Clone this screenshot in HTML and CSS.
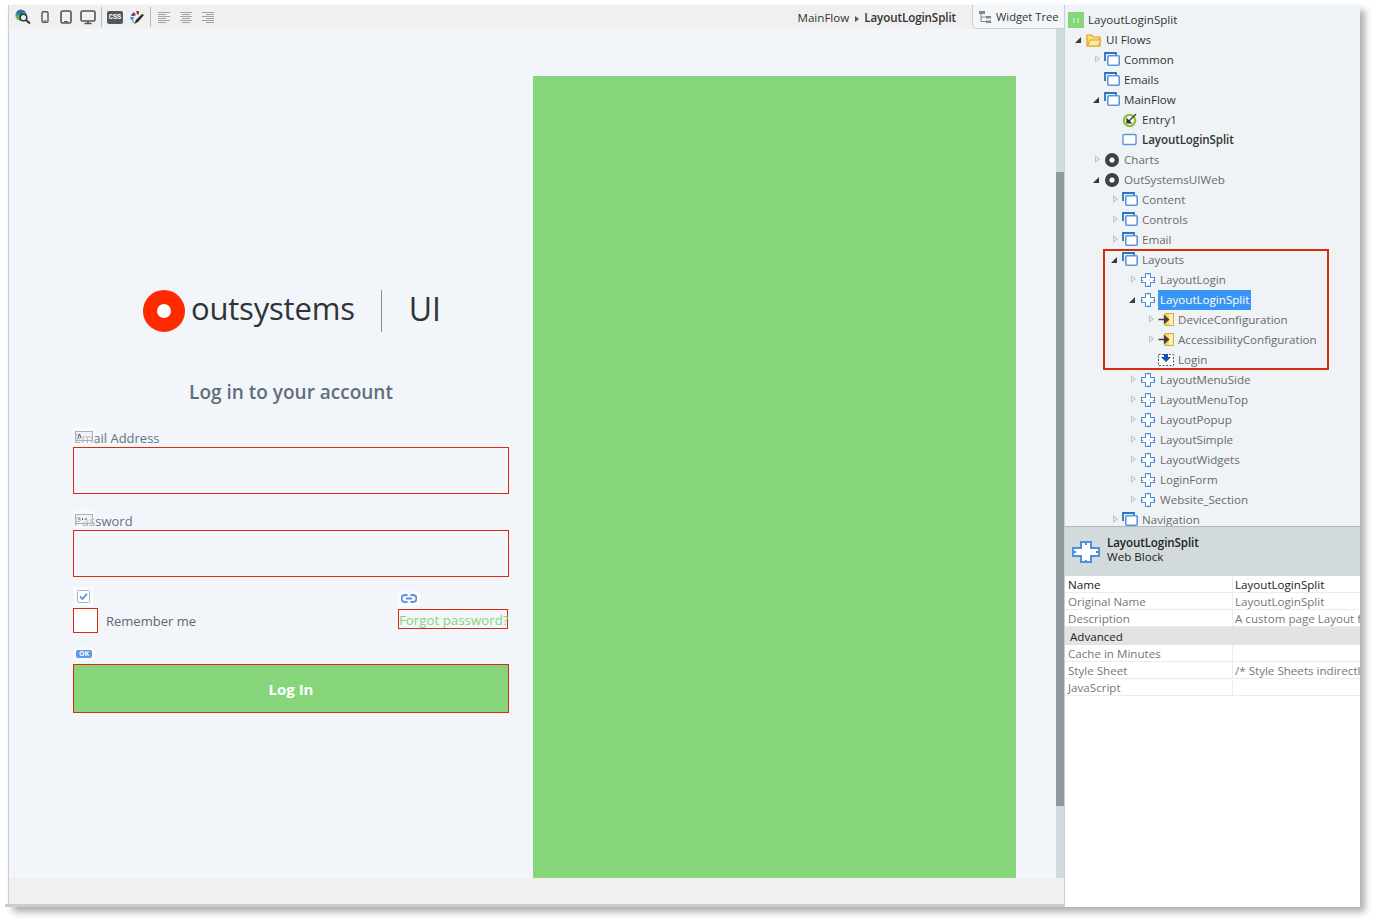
FILE: index.html
```html
<!DOCTYPE html>
<html lang="en">
<head>
  <meta charset="UTF-8">
  <title>LayoutLoginSplit</title>
  <link rel="stylesheet" href="styles.css">
</head>
<body>

<svg class="defs" width="0" height="0">
  <symbol id="flow" viewBox="0 0 16 16">
    <path d="M1 9V1h11v2" fill="none" stroke="#2a74c2" stroke-width="1.800"/>
    <rect x="3.800" y="3.800" width="11.400" height="9.400" rx="1" fill="#fff" stroke="#5f95d9" stroke-width="1.600"/>
  </symbol>
  <symbol id="block" viewBox="0 0 16 16">
    <path d="M5.500 1.500h5v4h4v5h-4v4h-5v-4h-4v-5h4z" fill="#fff" stroke="#4d8fdc" stroke-width="1.200" shape-rendering="crispEdges"/>
    <path d="M8 1.500v1.500M8 13v1.500M1.500 8H3M13 8h1.500" stroke="#4d8fdc" shape-rendering="crispEdges"/>
  </symbol>
  <symbol id="input" viewBox="0 0 16 16">
    <rect x="7" y="1.500" width="8.500" height="12" fill="#ffd84d" stroke="#c9b15a"/>
    <path d="M11 2h4v11h-4z" fill="#fff0b0"/>
    <path d="M.500 7.500h9M6.500 4l4 3.500-4 3.500z" fill="#4a3f3f" stroke="#4a3f3f" stroke-width="1.400"/>
  </symbol>
  <symbol id="placeholder" viewBox="0 0 16 16">
    <rect x=".5" y="2.500" width="15" height="11" fill="#fff" stroke="#555" stroke-dasharray="2 1.500"/>
    <path d="M6 2h4v3h3l-5 5-5-5h3z" fill="#0b55b0"/>
  </symbol>
  <symbol id="module" viewBox="0 0 16 16">
    <circle cx="8" cy="8" r="7" fill="#3b4347"/>
    <circle cx="8" cy="8" r="2.600" fill="#fff"/>
  </symbol>
</svg>

<div class="window">
  <div class="editor">
    <div class="toolbar">
      <div class="tools">
        <svg class="tool" width="18" height="16" viewBox="0 0 18 16"><circle cx="7" cy="6" r="5.500" fill="#3f8f8f"/><path d="M3 2l4-1.500 3 2-3 3-3-1z" fill="#2f6fb5"/><path d="M1.500 7l3-1 1 4-2 1z" fill="#7fb04a"/><circle cx="9.500" cy="8.500" r="3.300" fill="#e8f0f0" stroke="#333" stroke-width="1.500"/><path d="M12 11l4 3.500" stroke="#333" stroke-width="2"/></svg>
        <svg class="tool t-phone" width="8" height="12" viewBox="0 0 8 12"><rect x="1" y=".8" width="6" height="10.400" rx="1.300" fill="none" stroke="#555" stroke-width="1.400"/><path d="M3 9.800h2" stroke="#555"/></svg>
        <svg class="tool t-tablet" width="12" height="14" viewBox="0 0 12 14"><rect x="1" y="1" width="10" height="12" rx="1.500" fill="none" stroke="#555" stroke-width="1.600"/><path d="M4 11.500h4" stroke="#555"/></svg>
        <svg class="tool t-desktop" width="16" height="15" viewBox="0 0 16 15"><rect x="1" y="1" width="14" height="10" rx="1.500" fill="none" stroke="#555" stroke-width="1.600"/><path d="M4.500 13.500h7M8 11v2" stroke="#555" stroke-width="1.600"/></svg>
        <span class="sep"></span>
        <span class="css-icon">CSS</span>
        <svg class="tool" width="16" height="15" viewBox="0 0 16 15"><path d="M2 6a6 6 0 0 1 3-4l2 3-2 1z" fill="#6b3f8f"/><path d="M7 1h3v3.500H8z" fill="#c9302c"/><path d="M1 7h4l-1 3H2z" fill="#2f9ae0"/><path d="M3 10.500h2l-1 3z" fill="#2f9ae0"/><path d="M5 14l2-4 6-6 2 1-6 7z" fill="#2b2b2b"/></svg>
        <span class="sep sep-2"></span>
        <span class="align a-left"><i></i><i></i><i></i><i></i><i></i><i></i></span>
        <span class="align a-center"><i></i><i></i><i></i><i></i><i></i><i></i></span>
        <span class="align a-right"><i></i><i></i><i></i><i></i><i></i><i></i></span>
      </div>
      <div class="crumbs">MainFlow <span class="crumb-arrow"></span> <b>LayoutLoginSplit</b></div>
      <div class="widget-tab">
        <svg width="14" height="14" viewBox="0 0 14 14"><path d="M1 1h6v3H1zM8 6h5v2.500H8zM8 10.500h5V13H8z" fill="#7d8a8f"/><path d="M3 4v7.500h5M3 7h5" fill="none" stroke="#7d8a8f"/></svg>
        Widget Tree
      </div>
    </div>
    <div class="canvas-wrap">
      <div class="canvas">
        <div class="login">
          <div class="logo">
            <span class="logo-mark"></span>
            <span class="logo-name">outsystems</span>
            <span class="logo-div"></span>
            <span class="logo-ui">UI</span>
          </div>
          <h1 class="login-title">Log in to your account</h1>

          <div class="field">
            <div class="label-line">
              <span class="ph-icon">
                <svg width="18" height="10" viewBox="0 0 18 10"><rect x=".5" y=".5" width="17" height="9" fill="#e8ebee" fill-opacity=".4" stroke="#a9b0b6"/><path d="M3 7l1.500-4L6 7" fill="none" stroke="#555"/></svg>
              </span>
              <label class="label">Email Address</label>
            </div>
            <div class="input"></div>
          </div>
          <div class="field">
            <div class="label-line">
              <span class="ph-icon">
                <svg width="18" height="10" viewBox="0 0 18 10"><rect x=".5" y=".5" width="17" height="9" fill="#e8ebee" fill-opacity=".4" stroke="#a9b0b6"/><path d="M3.500 5h1M7 5h1M10.500 5h1" stroke="#2f6fc9" stroke-width="2"/></svg>
              </span>
              <label class="label">Password</label>
            </div>
            <div class="input"></div>
          </div>

          <div class="options">
            <div class="remember">
              <svg class="check-icon" width="13" height="13" viewBox="0 0 13 13"><rect x=".5" y=".5" width="12" height="12" rx="1" fill="#fff" stroke="#aab4c0"/><path d="M3 6.500l2.500 2.500L10 3.800" fill="none" stroke="#5b93d8" stroke-width="1.800"/></svg>
              <div class="remember-line">
                <span class="checkbox"></span>
                <span class="remember-text">Remember me</span>
              </div>
            </div>
            <div class="forgot">
              <svg class="link-icon" width="16" height="9" viewBox="0 0 16 9"><path d="M6.500 1H4a3.500 3.500 0 0 0 0 7h2.500M9.500 1H12a3.500 3.500 0 0 1 0 7H9.500M5 4.500h6" fill="none" stroke="#5b93d8" stroke-width="2"/></svg>
              <a class="forgot-link">Forgot password?</a>
            </div>
          </div>

          <span class="ok-icon">OK</span>
          <div class="login-btn">Log In</div>
        </div>
        <div class="green-panel"></div>
      </div>
      <div class="scroll"><div class="scroll-thumb"></div></div>
    </div>
    <div class="footer"></div>
  </div>

  <div class="side">
    <div class="tree">
      <div class="row l0"><span class="app-icon">I I</span><span class="txt dark">LayoutLoginSplit</span></div>
      <div class="row l1"><span class="arr open"></span><svg class="ic" viewBox="0 0 16 16"><path d="M1 14V3h5l1.500 2H14v9z" fill="#ffd875" stroke="#e0a020" stroke-width="1.200"/><path d="M1.500 14l2.500-6h11l-2.500 6z" fill="#ffe9a8" stroke="#e0a020"/></svg><span class="txt dark">UI Flows</span></div>
      <div class="row l2"><span class="arr"></span><svg class="ic"><use href="#flow"/></svg><span class="txt dark">Common</span></div>
      <div class="row l2"><span class="arr none"></span><svg class="ic"><use href="#flow"/></svg><span class="txt dark">Emails</span></div>
      <div class="row l2"><span class="arr open"></span><svg class="ic"><use href="#flow"/></svg><span class="txt dark">MainFlow</span></div>
      <div class="row l3"><span class="arr none"></span><svg class="ic" viewBox="0 0 16 16"><circle cx="7.500" cy="8.500" r="5.600" fill="#fff" stroke="#8cc13f" stroke-width="2.400"/><path d="M5 11V7l4 4zM7 9l7-7" fill="#333" stroke="#333" stroke-width="1.200"/></svg><span class="txt dark">Entry1</span></div>
      <div class="row l3"><span class="arr none"></span><svg class="ic" viewBox="0 0 16 16"><rect x="1" y="2.500" width="13" height="10" rx="1" fill="#fff" stroke="#5f95d9" stroke-width="1.400"/></svg><span class="txt dark"><b>LayoutLoginSplit</b></span></div>
      <div class="row l2"><span class="arr"></span><svg class="ic"><use href="#module"/></svg><span class="txt">Charts</span></div>
      <div class="row l2"><span class="arr open"></span><svg class="ic"><use href="#module"/></svg><span class="txt">OutSystemsUIWeb</span></div>
      <div class="row l3"><span class="arr"></span><svg class="ic"><use href="#flow"/></svg><span class="txt">Content</span></div>
      <div class="row l3"><span class="arr"></span><svg class="ic"><use href="#flow"/></svg><span class="txt">Controls</span></div>
      <div class="row l3"><span class="arr"></span><svg class="ic"><use href="#flow"/></svg><span class="txt">Email</span></div>
      <div class="row l3"><span class="arr open"></span><svg class="ic"><use href="#flow"/></svg><span class="txt">Layouts</span></div>
      <div class="row l4"><span class="arr"></span><svg class="ic"><use href="#block"/></svg><span class="txt">LayoutLogin</span></div>
      <div class="row l4"><span class="arr open"></span><svg class="ic"><use href="#block"/></svg><span class="txt selected">LayoutLoginSplit</span></div>
      <div class="row l5"><span class="arr"></span><svg class="ic"><use href="#input"/></svg><span class="txt">DeviceConfiguration</span></div>
      <div class="row l5"><span class="arr"></span><svg class="ic"><use href="#input"/></svg><span class="txt">AccessibilityConfiguration</span></div>
      <div class="row l5"><span class="arr none"></span><svg class="ic"><use href="#placeholder"/></svg><span class="txt">Login</span></div>
      <div class="row l4"><span class="arr"></span><svg class="ic"><use href="#block"/></svg><span class="txt">LayoutMenuSide</span></div>
      <div class="row l4"><span class="arr"></span><svg class="ic"><use href="#block"/></svg><span class="txt">LayoutMenuTop</span></div>
      <div class="row l4"><span class="arr"></span><svg class="ic"><use href="#block"/></svg><span class="txt">LayoutPopup</span></div>
      <div class="row l4"><span class="arr"></span><svg class="ic"><use href="#block"/></svg><span class="txt">LayoutSimple</span></div>
      <div class="row l4"><span class="arr"></span><svg class="ic"><use href="#block"/></svg><span class="txt">LayoutWidgets</span></div>
      <div class="row l4"><span class="arr"></span><svg class="ic"><use href="#block"/></svg><span class="txt">LoginForm</span></div>
      <div class="row l4"><span class="arr"></span><svg class="ic"><use href="#block"/></svg><span class="txt">Website_Section</span></div>
      <div class="row l3"><span class="arr"></span><svg class="ic"><use href="#flow"/></svg><span class="txt">Navigation</span></div>
      <div class="highlight"></div>
    </div>

    <div class="info">
      <svg class="info-icon" width="32" height="24" viewBox="0 0 16 16" preserveAspectRatio="none"><use href="#block"/></svg>
      <div class="info-text"><b>LayoutLoginSplit</b><br>Web Block</div>
    </div>

    <div class="props">
      <div class="prop dark"><span>Name</span><span>LayoutLoginSplit</span></div>
      <div class="prop"><span>Original Name</span><span>LayoutLoginSplit</span></div>
      <div class="prop"><span>Description</span><span>A custom page Layout for login screens</span></div>
      <div class="prop-group">Advanced</div>
      <div class="prop"><span>Cache in Minutes</span><span></span></div>
      <div class="prop"><span>Style Sheet</span><span>/* Style Sheets indirectly applied */</span></div>
      <div class="prop"><span>JavaScript</span><span></span></div>
    </div>
  </div>
</div>

</body>
</html>
```

FILE: styles.css
```css
* { box-sizing: border-box; }
body { margin: 0; padding: 5px 0 0 8px; min-height: 922px; background: #fff; font-family: "Open Sans", "Noto Sans", sans-serif; font-size: 11.6px; color: #555; }
.defs { display: block; height: 0; }

.window { display: flex; width: 1352px; height: 902px; background: #fff; box-shadow: 5px 5px 7px rgba(0, 0, 0, .32); }

/* left: preview */
.editor { display: flex; flex-direction: column; width: 1057px; border-left: 1px solid #c5d0d2; border-right: 1px solid #c5d0d2; }
.toolbar { display: flex; align-items: center; height: 24px; flex: none; background: #f0f0f0; position: relative; }
.tools { display: flex; align-items: center; padding-left: 5px; }
.tool { display: block; margin-right: 6px; }
.t-phone { margin: 0 11px 0 3px; }
.t-tablet { margin-right: 8px; }
.t-desktop { margin-right: 3px; }
.sep { width: 1px; height: 20px; background: #b5b9bb; margin: 0 5px 0 2px; }
.sep-2 { margin: 0 7px 0 -1px; }
.css-icon { width: 16px; height: 13px; background: #4c5a60; color: #fff; font: bold 7px "Liberation Mono", monospace; line-height: 13px; text-align: center; border-radius: 2px; margin-right: 6px; }
.align { display: flex; flex-direction: column; gap: 1px; width: 12px; margin-right: 10px; }
.align i { display: block; width: 12px; height: 1px; background: #a4a4a4; }
.align i:nth-child(even) { width: 8px; }
.a-center { align-items: center; }
.a-right { align-items: flex-end; }
.crumbs { margin-left: auto; color: #333; padding-right: 16px; white-space: nowrap; }
.crumbs b { font-weight: 600; letter-spacing: -.1px; }
.crumb-arrow { display: inline-block; border-left: 4px solid #555; border-top: 3.5px solid transparent; border-bottom: 3.5px solid transparent; margin: 0 2px 0 3px; }
.widget-tab { display: flex; align-items: center; gap: 4px; width: 93px; height: 24px; padding-left: 5px; font-size: 11.200px; color: #333; white-space: nowrap; background: #f3f6f9; border: 1px solid #c5d0d2; border-top: none; border-radius: 0 0 0 5px; margin-right: -1px; }

.canvas-wrap { display: flex; flex: 1; min-height: 0; }
.canvas { display: flex; flex: 1; padding: 47px 40px 0 0; background: #f2f6fa; }
.login { width: 524px; padding: 214px 24px 0 64px; flex: none; }
.green-panel { flex: 1; background: #87d57b; }
.scroll { width: 8px; background: #d1dadc; padding-top: 143px; }
.scroll-thumb { height: 634px; background: #8f9a9e; }

.logo { display: flex; align-items: center; height: 42px; margin-left: 70px; color: #2f3438; }
.logo-mark { width: 42px; height: 42px; border-radius: 50%; border: 14px solid #ff2a00; background: #fff; flex: none; }
.logo-name { font-size: 31px; margin: 0 0 6px 6px; letter-spacing: -.2px; }
.logo-div { width: 1px; height: 42px; background: #8a9298; margin-left: 26px; }
.logo-ui { font-size: 32px; margin: 0 0 6px 27px; }
.login-title { margin: 46px 0 22px; font-size: 19px; line-height: 28px; font-weight: 600; text-align: center; color: #606e7b; }

.field { margin-bottom: 17px; }
.label-line { position: relative; height: 19px; }
.label { display: block; font-size: 13px; line-height: 21px; color: #667280; padding-left: 1px; }
.ph-icon { position: absolute; left: 0; top: -1px; z-index: 1; display: flex; align-items: center; justify-content: center; width: 22px; height: 18px; background: rgba(255, 255, 255, .4); }
.input { height: 47px; border: 1px solid #d92b0e; background: #f2f6fa; }

.options { display: flex; margin-top: -4px; position: relative; }
.remember { width: 325px; }
.check-icon { display: block; margin-left: 4px; box-shadow: 0 0 0 3px rgba(255, 255, 255, .5); }
.remember-line { display: flex; align-items: center; margin-top: 5px; }
.checkbox { width: 25px; height: 25px; background: #fff; border: 1px solid #d92b0e; }
.remember-text { margin-left: 8px; font-size: 13px; color: #5d6770; }
.forgot { width: 110px; }
.link-icon { display: block; margin: 4px 0 0 3px; box-shadow: 0 0 0 3px rgba(255, 255, 255, .5); }
.forgot-link { display: block; margin-top: 6px; height: 20px; line-height: 20px; font-size: 13.300px; white-space: nowrap; color: #87d57b; border: 1px solid #d92b0e; }
.ok-icon { display: block; width: 16px; height: 8px; margin: 17px 0 0 3px; background: #5f9ae0; color: #fff; border-radius: 2px; font: bold 7px/8px "Open Sans", sans-serif; text-align: center; box-shadow: 0 0 0 3px rgba(255, 255, 255, .5); }
.login-btn { height: 49px; margin-top: 6px; line-height: 48px; background: #87d57b; border: 1px solid #d92b0e; text-align: center; color: #fff; font-size: 15px; font-weight: 700; }

.footer { position: relative; height: 29px; flex: none; background: #f0f0f0; border-bottom: 3px solid #c5d0d2; }
.footer::after { content: ""; position: absolute; left: -4px; bottom: -3px; width: 4px; height: 3px; background: #c5d0d2; }

/* right: tree and properties */
.side { flex: 1; display: flex; flex-direction: column; min-width: 0; overflow: hidden; }
.tree { position: relative; height: 521px; flex: none; padding-top: 5px; overflow: hidden; background: #eff3f6; }
.row { display: flex; align-items: center; height: 20px; white-space: nowrap; }
.l0 { padding-left: 3px; }
.l1 { padding-left: 11px; }
.l2 { padding-left: 29px; }
.l3 { padding-left: 47px; }
.l4 { padding-left: 65px; }
.l5 { padding-left: 83px; }
.arr { width: 10px; height: 10px; flex: none; position: relative; }
.arr::before { content: ""; position: absolute; left: 1px; top: 0; border-left: 5px solid #c0c5c7; border-top: 4.500px solid transparent; border-bottom: 4.500px solid transparent; }
.arr::after { content: ""; position: absolute; left: 2px; top: 2px; border-left: 2.500px solid #eff3f6; border-top: 2.500px solid transparent; border-bottom: 2.500px solid transparent; }
.arr.open::before { left: -1px; top: 2px; border: none; width: 0; height: 0; border-bottom: 6px solid #3a3a3a; border-left: 6px solid transparent; }
.arr.open::after, .arr.none::after { display: none; }
.arr.none::before { display: none; }
.ic { width: 16px; height: 16px; flex: none; }
.app-icon { width: 16px; height: 16px; background: #87d57b; color: #fff; font-size: 8px; line-height: 15px; text-align: center; flex: none; }
.txt { margin-left: 2px; padding: 0 2px; height: 20px; line-height: 20px; color: #6a6a6a; }
.txt.dark { color: #333; }
.txt b { font-weight: 600; letter-spacing: -.1px; }
.selected { background: #3a96f5; color: #fff; }
.highlight { position: absolute; left: 38px; top: 244px; width: 226px; height: 121px; border: 2px solid #d92b0e; }

.info { display: flex; align-items: center; height: 50px; flex: none; padding: 0 0 4px 5px; background: #d3dadc; border-top: 1px solid #b0b8ba; color: #222; line-height: 14px; }
.info-icon { flex: none; margin: 4px 5px 0 0; }
.info-text b { font-weight: 600; letter-spacing: -.1px; }

.props { flex: 1; background: #fff; }
.prop { display: grid; grid-template-columns: 167px 1fr; height: 17px; line-height: 18px; border-bottom: 1px solid #e4eff4; color: #777; overflow: hidden; white-space: nowrap; }
.prop span { padding-left: 3px; overflow: hidden; }
.prop span:last-child { border-left: 1px solid #e4eff4; padding-left: 2px; }
.prop.dark { color: #222; }
.prop-group { height: 18px; line-height: 20px; padding-left: 5px; background: #e3e3e3; color: #222; }
```
